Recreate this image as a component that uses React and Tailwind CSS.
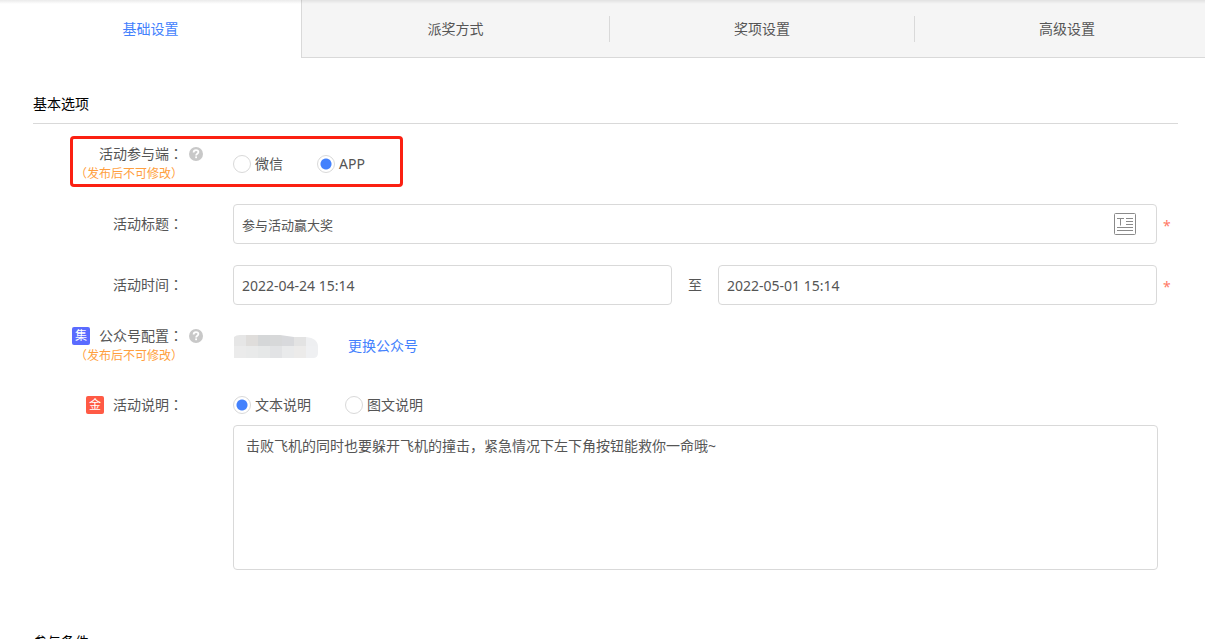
import React from 'react';
import clsx from 'clsx';

const TABS = ['基础设置', '派奖方式', '奖项设置', '高级设置'];

const INPUT_CLASS =
  'h-10 w-full min-w-0 rounded-sm border border-[#d9d9d9] bg-white px-2 text-[#555] outline-none';

/** Full-width punctuation, centred in its box */
const Punct = ({ children }) => (
  <span className="font-['Noto_Sans_CJK_TC',sans-serif] leading-none">{children}</span>
);

const HelpIcon = () => (
  <svg className="h-3.5 w-3.5" viewBox="0 0 14 14" aria-hidden="true">
    <circle cx="7" cy="7" r="7" fill="#c8c8c8" />
    <path
      d="M4.6 5.6C4.6 4 5.6 3.1 7 3.1s2.4.8 2.4 2c0 1.6-2.3 1.6-2.3 3.3"
      fill="none"
      stroke="#fff"
      strokeWidth="1.8"
    />
    <rect x="6.2" y="9.4" width="1.8" height="1.8" fill="#fff" />
  </svg>
);

const TemplateIcon = () => (
  <svg className="h-[22px] w-[22px]" viewBox="0 0 22 22" fill="none" stroke="#8a8a8a" aria-hidden="true">
    <rect x="0.5" y="0.5" width="21" height="21" rx="1" />
    <path d="M3 5.5h7M6.5 5.5v7M12 5.5h7M12 8.5h7M12 11.5h7M3 14.5h16M3 17.5h16" />
  </svg>
);

const MOSAIC = [
  ['#e6e6e6', '#dfdddb', '#d5d7d8', '#d7d8d9', '#d8d9dc', '#e3e3e3', '#eeeff1'],
  ['#ebebeb', '#e9eaea', '#e6e8e8', '#e2e3e5', '#e9eaeb', '#ecebea', '#eff0f2'],
];

/** Pixelated account name */
const MaskedName = () => (
  <svg className="h-6 w-[85px]" viewBox="0 0 85 24" role="img" aria-label="公众号">
    <clipPath id="mask-shape">
      <path d="M0 3Q2 1 6 1H46L60 3H72Q84 4 84 13V19Q84 24 79 24H0Z" />
    </clipPath>
    <g clipPath="url(#mask-shape)">
      {MOSAIC.map((row, y) =>
        row.map((fill, x) => (
          <rect key={`${x}-${y}`} x={x * 12} y={y * 12} width="12" height="12" fill={fill} />
        ))
      )}
    </g>
  </svg>
);

const Tag = ({ children, className }) => (
  <span className={clsx('mr-[9px] flex h-[18px] w-[18px] items-center justify-center rounded-xs text-xs text-white', className)}>
    {children}
  </span>
);

const FormRow = ({ label, htmlFor, tag, help, note, required, className, children }) => {
  const Label = htmlFor ? 'label' : 'span';
  return (
    <div className={clsx('flex', note ? 'items-start' : 'items-center', className)}>
      <div className="w-[150px] shrink-0 text-right">
        <div className="flex h-5 items-center justify-end leading-5">
          {tag}
          <Label htmlFor={htmlFor}>
            {label}
            <Punct>：</Punct>
          </Label>
        </div>
        {note && (
          <p className="h-5 text-xs leading-5 text-[#ff9f40]">
            <Punct>（</Punct>
            {note}
            <Punct>）</Punct>
          </p>
        )}
      </div>
      <div className="flex h-5 w-[50px] shrink-0 items-center pl-1.5">
        {help && (
          <button type="button" aria-label="帮助">
            <HelpIcon />
          </button>
        )}
      </div>
      <div className="flex min-h-9 min-w-0 flex-1 items-center">{children}</div>
      <span className="w-[21px] shrink-0 pt-1 pl-1.5 text-[#ff7a66]">{required && '*'}</span>
    </div>
  );
};

const Radio = ({ name, label, className, ...props }) => (
  <label className={clsx('flex items-center', className)}>
    <input
      type="radio"
      name={name}
      className="mr-1 h-[18px] w-[18px] appearance-none rounded-full border border-[#d9d9d9] bg-white checked:bg-[radial-gradient(circle,#4381fd_5px,#fff_6px)]"
      {...props}
    />
    {label}
  </label>
);

const SectionTitle = ({ children }) => (
  <h2 className="border-b border-[#d9d9d9] pb-[9px] leading-5 text-black">{children}</h2>
);

export default function App() {
  return (
    <div className="relative h-screen overflow-hidden bg-white font-['Noto_Sans','Noto_Sans_CJK_SC',sans-serif] text-sm text-[#555]">
      <nav className="grid h-[58px] w-[calc(100%+14px)] grid-cols-[301fr_308fr_305fr_305fr]">
        {TABS.map((tab, i) => (
          <button
            key={tab}
            type="button"
            className={clsx(
              'flex items-center',
              i === 0 ? 'text-[#4381fd]' : 'border-b border-[#d9d9d9] bg-[#f5f5f5]',
              i === 1 && 'border-l'
            )}
          >
            <span className={clsx('flex h-[26px] flex-1 items-center justify-center', i > 1 && 'border-l border-[#d9d9d9]')}>
              {tab}
            </span>
          </button>
        ))}
      </nav>
      <div className="absolute inset-x-0 top-0 h-1 bg-linear-to-b from-black/8 to-transparent" />

      <main className="pt-9 pr-[27px] pl-[33px]">
        <SectionTitle>基本选项</SectionTitle>

        <form className="pt-5">
          <div className="relative mb-5">
            <FormRow label="活动参与端" note="发布后不可修改" help>
              <div className="flex h-10 items-center">
                <Radio name="client" label="微信" />
                <Radio name="client" label="APP" className="ml-[34px]" defaultChecked />
              </div>
            </FormRow>
            <div className="pointer-events-none absolute -top-2 left-[37px] h-[51px] w-[333px] rounded-sm border-3 border-[#fb2012]" />
          </div>

          <FormRow label="活动标题" htmlFor="title" required className="mb-[21px]">
            <div className="relative w-full">
              <input id="title" className={clsx(INPUT_CLASS, 'text-[13px]')} defaultValue="参与活动赢大奖" />
              <button type="button" aria-label="模板" className="absolute top-[9px] right-[21px]">
                <TemplateIcon />
              </button>
            </div>
          </FormRow>

          <FormRow label="活动时间" htmlFor="start" required className="mb-[21px]">
            <input id="start" className={INPUT_CLASS} defaultValue="2022-04-24 15:14" />
            <label htmlFor="end" className="mx-4 shrink-0">
              至
            </label>
            <input id="end" className={INPUT_CLASS} defaultValue="2022-05-01 15:14" />
          </FormRow>

          <FormRow
            label="公众号配置"
            note="发布后不可修改"
            help
            tag={<Tag className="bg-[#5a6bff]">集</Tag>}
            className="mb-[21px]"
          >
            <div className="flex h-10 items-center pl-px">
              <MaskedName />
              <a href="#account" className="ml-[29px] text-[#4381fd]">
                更换公众号
              </a>
            </div>
          </FormRow>

          <FormRow label="活动说明" htmlFor="desc" tag={<Tag className="bg-[#ff5a45]">金</Tag>}>
            <Radio name="descType" label="文本说明" defaultChecked />
            <Radio name="descType" label="图文说明" className="ml-[34px]" />
          </FormRow>
          <div className="mt-0.5 pr-5 pl-[200px]">
            <textarea
              id="desc"
              className="block h-[145px] w-full resize-none rounded-sm border border-[#d9d9d9] px-3 py-2.5 leading-5 text-[#555] outline-none"
              defaultValue="击败飞机的同时也要躲开飞机的撞击，紧急情况下左下角按钮能救你一命哦~"
            />
          </div>
        </form>

        <div className="pt-[62px]">
          <SectionTitle>参与条件</SectionTitle>
        </div>
      </main>
    </div>
  );
}
